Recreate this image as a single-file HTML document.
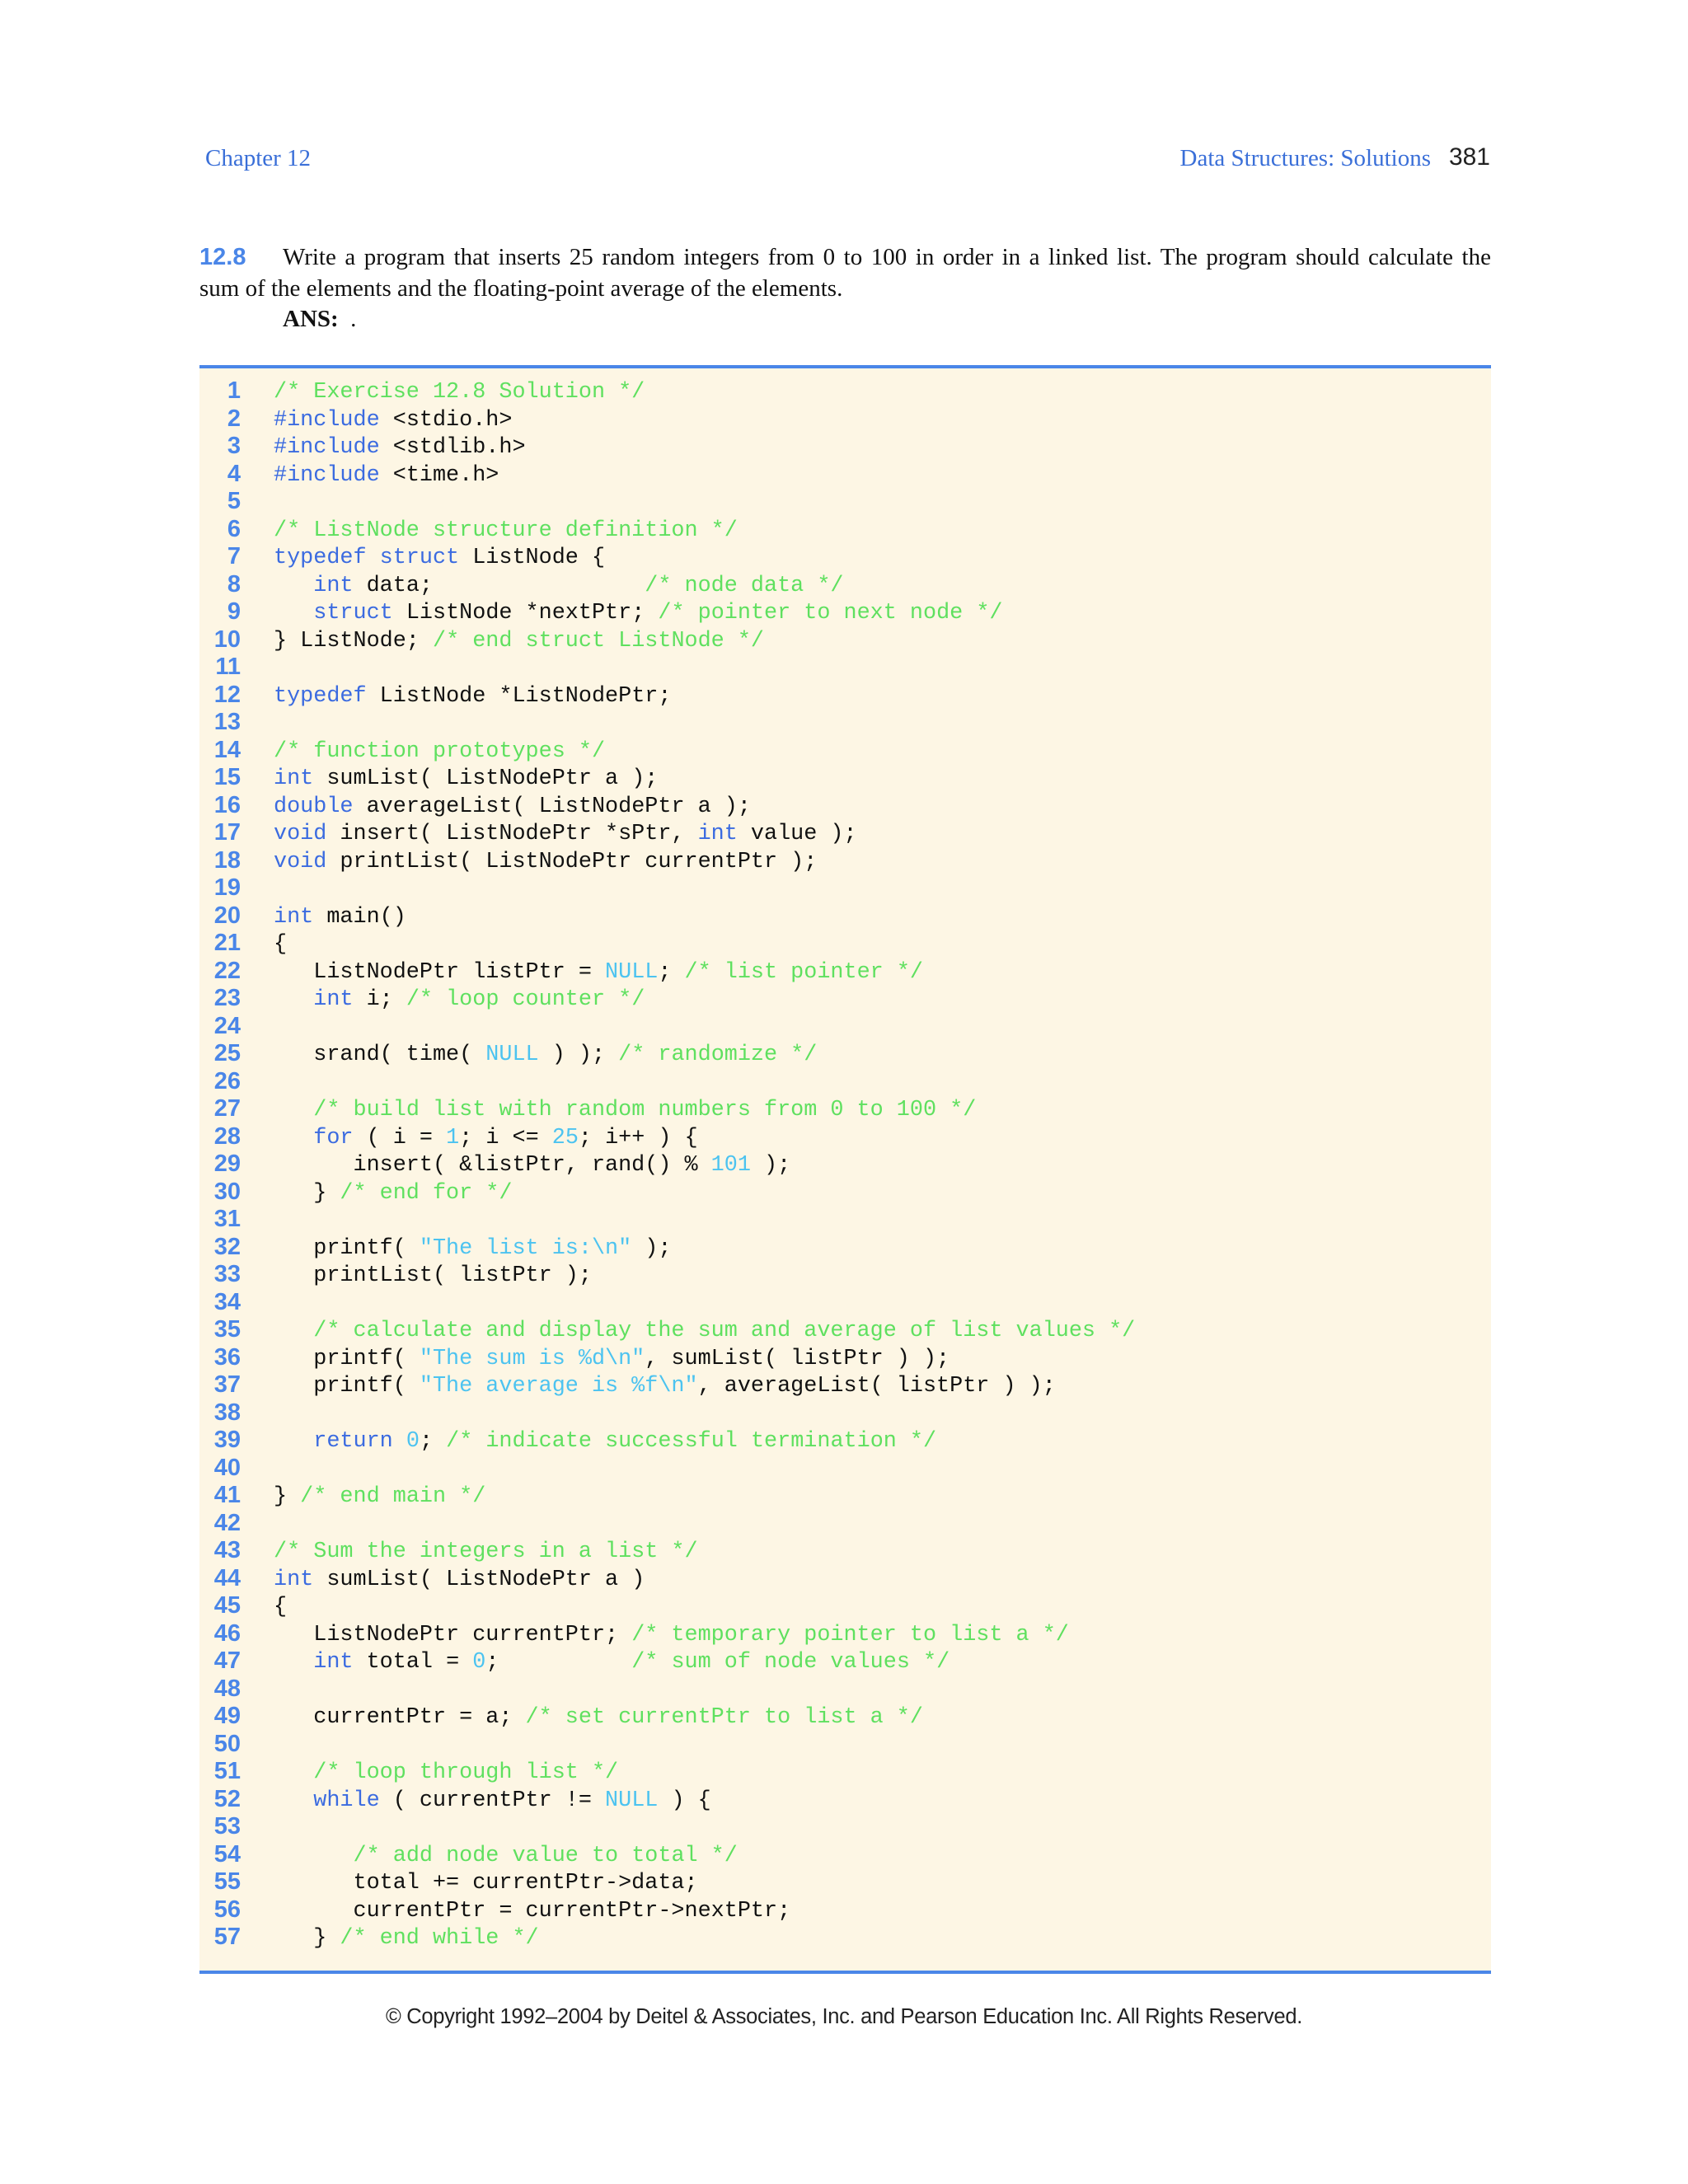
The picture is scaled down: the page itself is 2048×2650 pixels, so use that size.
<!DOCTYPE html>
<html><head><meta charset="utf-8"><style>
body{margin:0;width:2048px;height:2650px;background:#fff;position:relative;overflow:hidden}
.t{position:absolute;font-family:"Liberation Serif",serif;white-space:nowrap}
.hd{color:#3a6fd8;font-size:29px}
#box{position:absolute;left:242px;top:443px;width:1567px;height:1944px;background:#fdf6e4;border-top:4px solid #4a86e8;border-bottom:4px solid #4a86e8}
.ln{position:absolute;left:232px;width:60px;text-align:right;font-family:"Liberation Sans",sans-serif;font-weight:bold;color:#4a86e8;font-size:29px;line-height:33.5px}
.cd{position:absolute;left:332px;font-family:"Liberation Mono",monospace;font-size:26.8px;line-height:33.5px;white-space:pre;color:#111}
.k{color:#3b6be0}.c{color:#5fe05f}.s{color:#4cc3f0}
</style></head><body>
<div class="t hd" style="left:249px;top:176px">Chapter 12</div>
<div class="t hd" style="right:312px;top:176px">Data Structures: Solutions</div>
<div class="t" style="right:240px;top:174px;font-family:'Liberation Sans',sans-serif;font-size:30px;color:#222">381</div>
<div class="t" style="left:242px;top:296px;font-family:'Liberation Sans',sans-serif;font-weight:bold;color:#4a86e8;font-size:29px">12.8</div>
<div class="t" style="left:343px;top:296px;font-size:29px;color:#111;width:1466px;text-align:justify;text-align-last:justify">Write a program that inserts 25 random integers from 0 to 100 in order in a linked list. The program should calculate the</div>
<div class="t" style="left:242px;top:334px;font-size:29px;color:#111">sum of the elements and the floating-point average of the elements.</div>
<div class="t" style="left:343px;top:371px;font-size:29px;color:#111"><b>ANS:</b>&nbsp; .</div>
<div id="box"></div>
<div class="ln" style="top:458px">1<br>2<br>3<br>4<br>5<br>6<br>7<br>8<br>9<br>10<br>11<br>12<br>13<br>14<br>15<br>16<br>17<br>18<br>19<br>20<br>21<br>22<br>23<br>24<br>25<br>26<br>27<br>28<br>29<br>30<br>31<br>32<br>33<br>34<br>35<br>36<br>37<br>38<br>39<br>40<br>41<br>42<br>43<br>44<br>45<br>46<br>47<br>48<br>49<br>50<br>51<br>52<br>53<br>54<br>55<br>56<br>57</div>
<div class="cd" style="top:460px"><span class="c">/* Exercise 12.8 Solution */</span>
<span class="k">#include</span> &lt;stdio.h&gt;
<span class="k">#include</span> &lt;stdlib.h&gt;
<span class="k">#include</span> &lt;time.h&gt;

<span class="c">/* ListNode structure definition */</span>
<span class="k">typedef struct</span> ListNode {
   <span class="k">int</span> data;                <span class="c">/* node data */</span>
   <span class="k">struct</span> ListNode *nextPtr; <span class="c">/* pointer to next node */</span>
} ListNode; <span class="c">/* end struct ListNode */</span>

<span class="k">typedef</span> ListNode *ListNodePtr;

<span class="c">/* function prototypes */</span>
<span class="k">int</span> sumList( ListNodePtr a );
<span class="k">double</span> averageList( ListNodePtr a );
<span class="k">void</span> insert( ListNodePtr *sPtr, <span class="k">int</span> value );
<span class="k">void</span> printList( ListNodePtr currentPtr );

<span class="k">int</span> main()
{
   ListNodePtr listPtr = <span class="s">NULL</span>; <span class="c">/* list pointer */</span>
   <span class="k">int</span> i; <span class="c">/* loop counter */</span>

   srand( time( <span class="s">NULL</span> ) ); <span class="c">/* randomize */</span>

   <span class="c">/* build list with random numbers from 0 to 100 */</span>
   <span class="k">for</span> ( i = <span class="s">1</span>; i &lt;= <span class="s">25</span>; i++ ) {
      insert( &amp;listPtr, rand() % <span class="s">101</span> );
   } <span class="c">/* end for */</span>

   printf( <span class="s">"The list is:\n"</span> );
   printList( listPtr );

   <span class="c">/* calculate and display the sum and average of list values */</span>
   printf( <span class="s">"The sum is %d\n"</span>, sumList( listPtr ) );
   printf( <span class="s">"The average is %f\n"</span>, averageList( listPtr ) );

   <span class="k">return</span> <span class="s">0</span>; <span class="c">/* indicate successful termination */</span>

} <span class="c">/* end main */</span>

<span class="c">/* Sum the integers in a list */</span>
<span class="k">int</span> sumList( ListNodePtr a )
{
   ListNodePtr currentPtr; <span class="c">/* temporary pointer to list a */</span>
   <span class="k">int</span> total = <span class="s">0</span>;          <span class="c">/* sum of node values */</span>

   currentPtr = a; <span class="c">/* set currentPtr to list a */</span>

   <span class="c">/* loop through list */</span>
   <span class="k">while</span> ( currentPtr != <span class="s">NULL</span> ) {

      <span class="c">/* add node value to total */</span>
      total += currentPtr-&gt;data;
      currentPtr = currentPtr-&gt;nextPtr;
   } <span class="c">/* end while */</span></div>
<div class="t" style="left:0;width:2048px;text-align:center;top:2433px;font-family:'Liberation Sans',sans-serif;font-size:25.5px;color:#222;letter-spacing:-0.3px">© Copyright 1992–2004 by Deitel &amp; Associates, Inc. and Pearson Education Inc. All Rights Reserved.</div>
</body></html>
